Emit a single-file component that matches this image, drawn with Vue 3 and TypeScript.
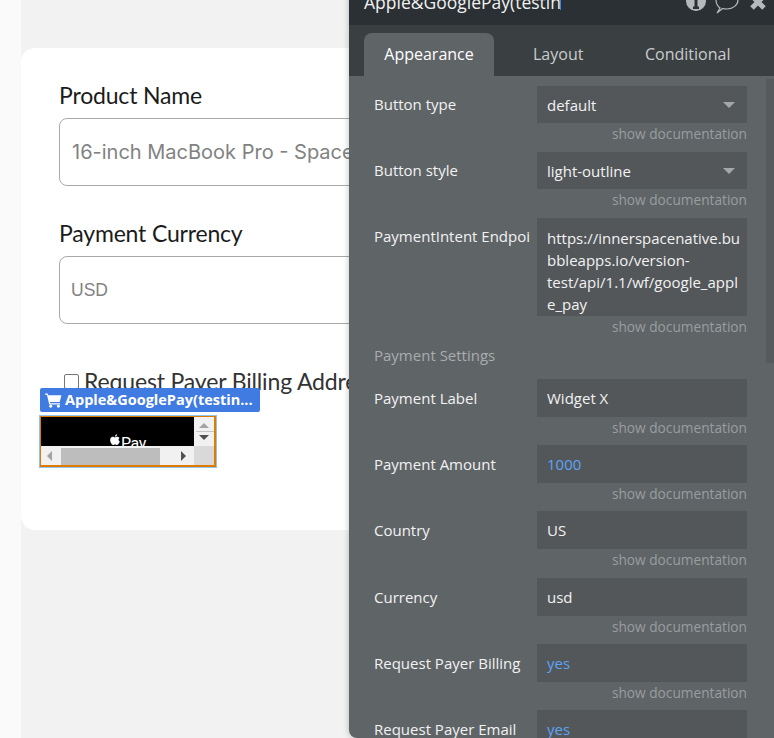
<script setup lang="ts">
interface Row { label: string; value: string; kind?: 'select' | 'area' | 'blue' }
const top: Row[] = [
  { label: 'Button type', value: 'default', kind: 'select' },
  { label: 'Button style', value: 'light-outline', kind: 'select' },
  { label: 'PaymentIntent Endpoi', value: 'https://innerspacenative.bubbleapps.io/version-test/api/1.1/wf/google_apple_pay', kind: 'area' },
]
const bottom: Row[] = [
  { label: 'Payment Label', value: 'Widget X' },
  { label: 'Payment Amount', value: '1000', kind: 'blue' },
  { label: 'Country', value: 'US' },
  { label: 'Currency', value: 'usd' },
  { label: 'Request Payer Billing', value: 'yes', kind: 'blue' },
  { label: 'Request Payer Email', value: 'yes', kind: 'blue' },
]
</script>

<template>
  <div class="page">
    <div class="gutter"></div>
    <main class="canvas">
      <section class="card">
        <div class="field-label first">Product Name</div>
        <div class="input inter">16-inch MacBook Pro - Space Gray</div>
        <div class="field-label second">Payment Currency</div>
        <div class="input arial">USD</div>
        <label class="check"><span class="box"></span><span>Request Payer Billing Address</span></label>
        <div class="element">
          <div class="tag">
            <svg class="cart" viewBox="0 0 16 14" width="17" height="15"><path fill="#fff" d="M0 .5h2.600l.5 1.600h12.400l-1.700 6.200H4.700l.3 1.200h9.200v1.200H4L1.800 1.700H0z"/><circle fill="#fff" cx="5.400" cy="12.400" r="1.400"/><circle fill="#fff" cx="12.600" cy="12.400" r="1.400"/></svg>
            <span>Apple&amp;GooglePay(testin...</span>
          </div>
          <div class="frame">
            <div class="view">
              <div class="black">
                <svg class="apple" viewBox="0 0 12 14" width="10" height="12"><path fill="#fff" d="M8.600 0c.1 1.500-1.200 2.900-2.600 2.800C5.800 1.400 7.200.1 8.600 0zM11.400 4.600c-1.700 1-1.500 3.500.4 4.300-.6 1.700-1.900 4-3.300 4-.9 0-1.300-.6-2.400-.6s-1.600.6-2.400.6C2.100 12.900.2 9.700.2 7.100c0-2.500 1.600-3.900 3.200-3.900 1 0 1.900.7 2.500.7s1.600-.8 2.800-.8c1 0 2 .5 2.700 1.500z"/></svg>
                <span class="pay">Pay</span>
              </div>
              <div class="vbar">
                <span class="arrow up"></span>
                <span class="rule"></span>
                <span class="arrow down"></span>
              </div>
              <div class="hbar">
                <span class="arrow left"></span>
                <span class="thumb"></span>
                <span class="arrow right"></span>
              </div>
              <div class="corner"></div>
            </div>
          </div>
        </div>
      </section>
    </main>

    <aside class="panel">
      <header class="head">
        <span class="title">Apple&amp;GooglePay(testin</span>
        <span class="caret"></span>
        <svg class="icons" viewBox="0 0 95 33" width="95" height="33">
          <circle cx="17" cy="9" r="10" fill="#b4b9bb"/>
          <path fill="#2a3033" d="M15.500 6h3v8.500h1.500V17h-6v-2.500h1.500z"/>
          <path fill="none" stroke="#b4b9bb" stroke-width="1.200" d="M41 16C38.500 14 37 11 37 8 37 2 42-1 48-1s11 3 11 9c0 5-5 9-11 9-1.500 0-3-.1-4.500-.5L38 21z"/>
          <path fill="none" stroke="#b4b9bb" stroke-width="5" d="M73 4l12 12M85 4L73 16"/>
        </svg>
      </header>
      <nav class="tabs">
        <span class="tab active">Appearance</span>
        <span class="tab layout">Layout</span>
        <span class="tab cond">Conditional</span>
      </nav>
      <div class="body">
        <div class="track"><div class="track-thumb"></div></div>
        <div v-for="r in top" :key="r.label" class="row tight">
          <div class="rlabel">{{ r.label }}</div>
          <div class="control" :class="r.kind">
            <span>{{ r.value }}</span>
            <i v-if="r.kind === 'select'" class="tri"></i>
          </div>
          <div class="doc">show documentation</div>
        </div>
        <div class="settings">Payment Settings</div>
        <div v-for="r in bottom" :key="r.label" class="row">
          <div class="rlabel">{{ r.label }}</div>
          <div class="control" :class="r.kind"><span>{{ r.value }}</span></div>
          <div class="doc">show documentation</div>
        </div>
      </div>
    </aside>
  </div>
</template>

<style>
html, body { margin: 0; padding: 0; overflow: hidden; }
</style>

<style scoped>
.page {
  position: relative;
  display: flex;
  width: 774px;
  height: 738px;
  overflow: hidden;
  background: #f2f2f2;
}
.gutter { width: 21px; flex: none; background: #fafafa; }
.canvas { flex: 1; padding-top: 48px; min-width: 0; }
.card {
  width: 700px;
  height: 482px;
  box-sizing: border-box;
  padding-left: 38px;
  background: #fff;
  border-radius: 14px;
  overflow: hidden;
}
.field-label {
  font: 23px/30px Lato, sans-serif;
  letter-spacing: -0.18px;
  color: #1b1b1b;
}
.first { margin-top: 32px; }
.second { margin-top: 32px; }
.input {
  box-sizing: border-box;
  width: 600px;
  height: 68px;
  margin-top: 8px;
  padding-left: 12px;
  border: 1px solid #a9a9a9;
  border-radius: 8px;
  line-height: 66px;
  color: #828282;
  white-space: nowrap;
}
.inter { font-family: Inter, sans-serif; font-size: 20px; }
.arial { font-family: "Liberation Sans", sans-serif; font-size: 17.500px; padding-left: 11px; line-height: 67px; }
.check {
  display: flex;
  align-items: center;
  gap: 5px;
  margin: 42px 0 0 5px;
  font: 23px/30px Lato, sans-serif;
  letter-spacing: -0.15px;
  color: #333;
  white-space: nowrap;
}
.box {
  width: 13px;
  height: 13px;
  border: 1px solid #767676;
  border-radius: 2px;
  background: #fff;
}
.element {
  position: relative;
  margin: -8px 0 0 -19px;
  width: 300px;
  z-index: 1;
}
.tag {
  display: flex;
  align-items: center;
  gap: 3px;
  box-sizing: border-box;
  width: 220px;
  height: 24px;
  padding-left: 5px;
  border-radius: 2px;
  background: #3f7be0;
  color: #fff;
  font: 700 14.500px/24px "Open Sans", sans-serif;
  white-space: nowrap;
}
.cart { flex: none; }
.frame {
  box-sizing: border-box;
  width: 178px;
  height: 53px;
  margin: 3px 0 0 -1px;
  border: 1px solid #8cc4f4;
}
.view {
  box-sizing: border-box;
  display: grid;
  grid-template-columns: 153px 20px;
  grid-template-rows: 29px 19px;
  height: 51px;
  border: 1px solid #e07b00;
  border-width: 1px 2px 2px 1px;
  background: #fff;
}
.black {
  display: flex;
  justify-content: center;
  background: #000;
  color: #fff;
  padding: 17px 0 0 21px;
  box-sizing: border-box;
  overflow: hidden;
}
.apple { flex: none; }
.pay { font: 16px/19px Roboto, sans-serif; letter-spacing: -0.4px; margin-left: 1px; }
.vbar {
  position: relative;
  background: #f1f1f1;
}
.rule { position: absolute; left: 2px; right: 0; top: 14px; height: 1px; background: #c4c4c4; }
.arrow { position: absolute; width: 0; height: 0; border-style: solid; border-color: transparent; }
.up { left: 5px; top: 6px; border-width: 0 5px 5px; border-bottom-color: #a3a3a3; }
.down { left: 5px; top: 18px; border-width: 5px 5px 0; border-top-color: #505050; }
.hbar {
  position: relative;
  background: #f1f1f1;
}
.left { left: 6px; top: 5px; border-width: 5px 5px 5px 0; border-right-color: #a3a3a3; }
.right { right: 8px; top: 5px; border-width: 5px 0 5px 5px; border-left-color: #505050; }
.thumb { position: absolute; left: 20px; width: 99px; top: 2px; height: 17px; background: #bdbdbd; }
.corner { background: #d9d9d9; }

.panel {
  position: absolute;
  left: 349px;
  top: -8px;
  width: 425px;
  height: 746px;
  background: #5f6467;
  border-bottom-left-radius: 8px;
  font-family: "Open Sans", sans-serif;
  overflow: hidden;
  box-shadow: 0 0 6px rgba(0, 0, 0, .25);
}
.head {
  position: relative;
  height: 33px;
  background: #2a3033;
  color: #fff;
}
.title { position: absolute; left: 15px; top: -1px; font-size: 17.500px; line-height: 22px; color: #f1f1f1; white-space: nowrap; }
.caret { position: absolute; left: 211px; top: 2px; width: 1px; height: 16px; background: #3b82f6; }
.icons { position: absolute; left: 330px; top: 0; }
.tabs {
  position: relative;
  height: 51px;
  background: #3a3f42;
}
.tab { position: absolute; font-size: 16px; line-height: 22px; color: #c9cbcc; top: 18px; }
.active {
  left: 15px;
  top: 8px;
  width: 130px;
  height: 43px;
  line-height: 43px;
  text-align: center;
  background: #5f6467;
  border-radius: 8px 8px 0 0;
  color: #fff;
}
.layout { left: 184px; }
.cond { left: 296px; }
.body {
  position: relative;
  padding: 10px 0 0 25px;
}
.track { position: absolute; right: 0; top: 3px; width: 8px; height: 284px; }
.track-thumb { width: 8px; height: 100%; background: #565a5d; }
.row {
  display: grid;
  grid-template-columns: 163px 210px;
  grid-template-rows: auto auto;
  margin-bottom: 4.350px;
}
.row.tight { margin-bottom: 4.500px; }
.rlabel {
  font-size: 15px;
  line-height: 38px;
  color: #f2f2f2;
  white-space: nowrap;
  overflow: hidden;
}
.tight .rlabel { line-height: 37px; }
.control {
  box-sizing: border-box;
  display: flex;
  justify-content: space-between;
  align-items: center;
  height: 38px;
  padding: 0 12px 0 10px;
  background: #53575a;
  font-size: 15px;
  color: #f2f2f2;
}
.tight .control { height: 37px; }
.tight .control.area {
  height: 98px;
  align-items: flex-start;
  overflow: hidden;
  padding: 8.500px 5px 0 10px;
  line-height: 22.300px;
  overflow-wrap: anywhere;
}
.control.blue { color: #5ba4f5; }
.tri {
  width: 0;
  height: 0;
  flex: none;
  border-style: solid;
  border-color: #a4a7a9 transparent transparent;
  border-width: 6px 6px 0;
}
.doc {
  grid-column: 2;
  text-align: right;
  font-size: 13.700px;
  line-height: 22px;
  height: 24px;
  color: #9a9d9f;
}
.tight .doc { height: 24.500px; }
.settings {
  font-size: 15px;
  line-height: 20px;
  height: 20px;
  color: #a9acae;
  margin: 1px 0 13.600px;
}
</style>
